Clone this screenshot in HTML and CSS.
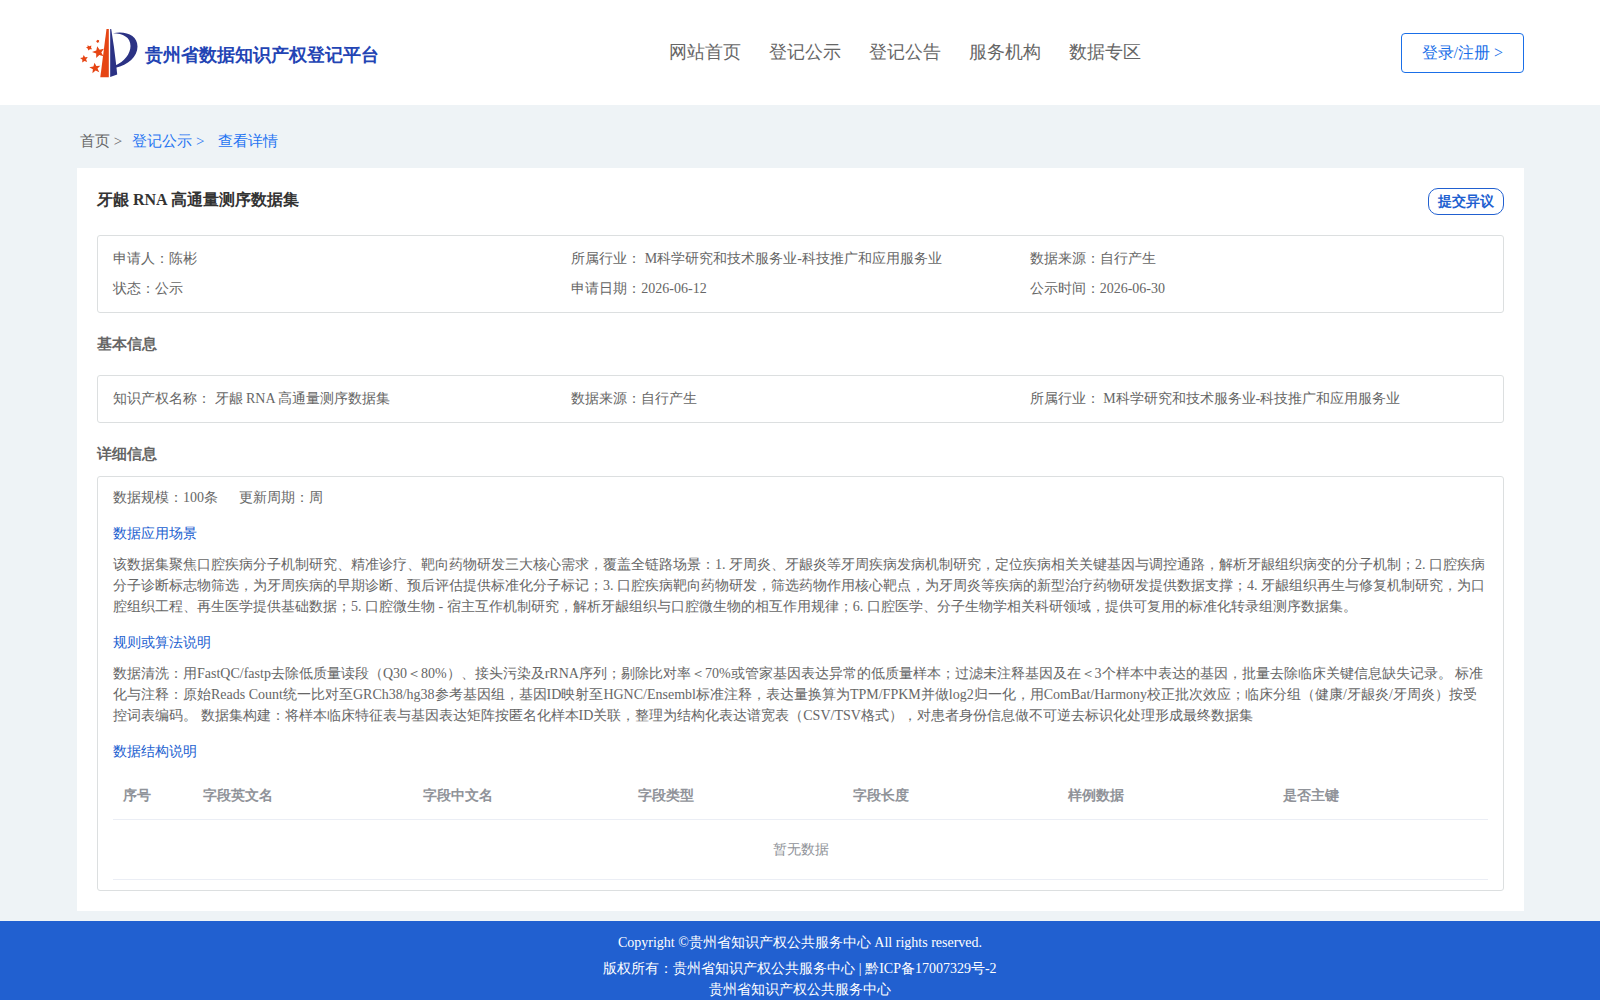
FILE: index.html
```html
<!DOCTYPE html>
<html lang="en">
<head>
<meta charset="utf-8">
<meta name="viewport" content="width=device-width, initial-scale=1">
<title>贵州省数据知识产权登记平台</title>
<link rel="stylesheet" href="styles.css">
</head>
<body>
<header class="header">
  <a class="brand" href="#">
    <svg class="brand-mark" viewBox="0 0 60 50" aria-hidden="true">
      <path fill="#e64514" d="M26.500 1h2.300v48.200h-8.500z"/>
      <path fill="#2b3284" d="M30.200 1h1l2.600 17 2.400 19 1 9.500-7 2.500z"/>
      <path fill="#2b3284" d="M33 5.200C46 2.500 57.500 7.500 57.500 18.500 57.500 29 48 37 35.500 39.800L35.500 37.500C44 33.500 50.500 26 50.500 18 50.500 9 43 5.500 33 5.200z"/>
      <g fill="#e64514">
        <path d="M17.200 18.200l2.400 3.600 4.300-1-2.600 3.600 2.200 3.900-4.200-1.400-3.100 3.200 0-4.500-4.200-1.700 4.300-1.300z"/>
        <path d="M14.500 34.800l1.800 3.300 4-.4-2.800 2.900 1.800 3.700-3.700-1.700-3.200 2.700.5-4-3.600-2.100 4.100-.8z"/>
        <path d="M3.700 27l1.400 2.300 2.700-.2-1.700 2.200 1 2.600-2.600-1-2.300 1.500.2-2.700-2.300-1.600 2.700-.7z"/>
        <path d="M7.500 17.200l1.900 1 2-.6-.4 1.900 1 1.800-2.100-.1-1.500 1.300-.7-2-1.700-1 1.700-.8z"/>
        <path d="M17 11.800l1 .5 1.200-.2-.3 1.200.4 1.100-1.200-.1-1 .7-.4-1.200-.9-.7 1.100-.4z"/>
      </g>
    </svg>
    <span class="brand-name">贵州省数据知识产权登记平台</span>
  </a>
  <nav class="nav">
    <a href="#">网站首页</a>
    <a href="#">登记公示</a>
    <a href="#">登记公告</a>
    <a href="#">服务机构</a>
    <a href="#">数据专区</a>
  </nav>
  <button class="login" type="button">登录/注册 &gt;</button>
</header>

<main class="main">
  <nav class="crumbs">
    <a href="#">首页 &gt;</a>
    <a class="crumb-link" href="#">登记公示 &gt;</a>
    <a class="crumb-link crumb-current" href="#">查看详情</a>
  </nav>

  <article class="card">
    <div class="card-head">
      <h1 class="title">牙龈 RNA 高通量测序数据集</h1>
      <button class="objection" type="button">提交异议</button>
    </div>

    <div class="box grid">
      <p>申请人：陈彬</p>
      <p>所属行业： M科学研究和技术服务业-科技推广和应用服务业</p>
      <p>数据来源：自行产生</p>
      <p>状态：公示</p>
      <p>申请日期：2026-06-12</p>
      <p>公示时间：2026-06-30</p>
    </div>

    <h2 class="section basic">基本信息</h2>
    <div class="box grid">
      <p>知识产权名称： 牙龈 RNA 高通量测序数据集</p>
      <p>数据来源：自行产生</p>
      <p>所属行业： M科学研究和技术服务业-科技推广和应用服务业</p>
    </div>

    <h2 class="section detail-title">详细信息</h2>
    <div class="box detail">
      <p class="facts"><span>数据规模：100条</span><span>更新周期：周</span></p>
      <h3 class="sub">数据应用场景</h3>
      <p>该数据集聚焦口腔疾病分子机制研究、精准诊疗、靶向药物研发三大核心需求，覆盖全链路场景：1. 牙周炎、牙龈炎等牙周疾病发病机制研究，定位疾病相关关键基因与调控通路，解析牙龈组织病变的分子机制；2. 口腔疾病分子诊断标志物筛选，为牙周疾病的早期诊断、预后评估提供标准化分子标记；3. 口腔疾病靶向药物研发，筛选药物作用核心靶点，为牙周炎等疾病的新型治疗药物研发提供数据支撑；4. 牙龈组织再生与修复机制研究，为口腔组织工程、再生医学提供基础数据；5. 口腔微生物 - 宿主互作机制研究，解析牙龈组织与口腔微生物的相互作用规律；6. 口腔医学、分子生物学相关科研领域，提供可复用的标准化转录组测序数据集。</p>
      <h3 class="sub">规则或算法说明</h3>
      <p>数据清洗：用FastQC/fastp去除低质量读段（Q30＜80%）、接头污染及rRNA序列；剔除比对率＜70%或管家基因表达异常的低质量样本；过滤未注释基因及在＜3个样本中表达的基因，批量去除临床关键信息缺失记录。 标准化与注释：原始Reads Count统一比对至GRCh38/hg38参考基因组，基因ID映射至HGNC/Ensembl标准注释，表达量换算为TPM/FPKM并做log2归一化，用ComBat/Harmony校正批次效应；临床分组（健康/牙龈炎/牙周炎）按受控词表编码。 数据集构建：将样本临床特征表与基因表达矩阵按匿名化样本ID关联，整理为结构化表达谱宽表（CSV/TSV格式），对患者身份信息做不可逆去标识化处理形成最终数据集</p>
      <h3 class="sub">数据结构说明</h3>
      <table class="fields">
        <colgroup><col class="col-index"><col class="col-name"><col><col><col><col><col></colgroup>
        <thead>
          <tr><th>序号</th><th>字段英文名</th><th>字段中文名</th><th>字段类型</th><th>字段长度</th><th>样例数据</th><th>是否主键</th></tr>
        </thead>
        <tbody>
          <tr><td class="empty" colspan="7">暂无数据</td></tr>
        </tbody>
      </table>
    </div>
  </article>
</main>

<footer class="footer">
  <p class="copyright">Copyright ©贵州省知识产权公共服务中心 All rights reserved.</p>
  <p>版权所有：贵州省知识产权公共服务中心 | 黔ICP备17007329号-2</p>
  <p>贵州省知识产权公共服务中心</p>
</footer>
</body>
</html>
```
FILE: styles.css
```css
* {
  box-sizing: border-box;
}

body {
  margin: 0;
  background: #eef3f6;
  color: #666;
  font-family: "Liberation Serif", serif;
  font-size: 14px;
  line-height: 21px;
  text-spacing-trim: space-all;
}

h1, h2, h3, p {
  margin: 0;
}

a {
  color: inherit;
  text-decoration: none;
}

button {
  font-family: inherit;
  background: #fff;
  cursor: pointer;
}

.header {
  display: flex;
  align-items: center;
  justify-content: space-between;
  height: 105px;
  padding: 0 76px 0 80px;
  background: #fff;
}

.brand {
  display: flex;
  align-items: center;
  gap: 5px;
  padding-right: 30px;
}

.brand-mark {
  width: 60px;
  height: 50px;
}

.brand-name {
  padding-top: 4px;
  color: #2344b4;
  font-size: 18px;
  font-weight: bold;
  line-height: 24px;
}

.nav {
  display: flex;
  gap: 28px;
  font-size: 18px;
  line-height: 24px;
  padding-bottom: 2px;
}

.login {
  height: 40px;
  padding: 0 20px;
  border: 1px solid #1a6fe8;
  border-radius: 4px;
  color: #1a6fe8;
  font-size: 16px;
  line-height: 38px;
}

.main {
  padding: 0 76px 10px 77px;
}

.crumbs {
  display: flex;
  gap: 10px;
  padding: 26px 3px 16px;
  font-size: 15px;
}

.crumb-link {
  color: #1f74f2;
}

.crumb-current {
  padding-left: 4px;
}

.card {
  padding: 20px;
  background: #fff;
}

.card-head {
  display: flex;
  align-items: flex-start;
  justify-content: space-between;
  margin-bottom: 20px;
}

.title {
  color: #333;
  font-size: 16px;
  line-height: 24px;
}

.objection {
  height: 27px;
  padding: 0 9px;
  border: 1px solid #2160d0;
  border-radius: 10px;
  color: #2160d0;
  font-size: 14px;
  font-weight: bold;
  line-height: 25px;
}

.box {
  padding: 8px 15px;
  border: 1px solid #dcdfe0;
  border-radius: 3px;
}

.grid {
  display: grid;
  grid-template-columns: repeat(3, 1fr);
  line-height: 30px;
}

.section {
  font-size: 15px;
  line-height: 22px;
}

.basic {
  margin: 20px 0;
}

.detail-title {
  margin: 20px 0 11px;
}

.detail {
  padding: 10px 15px;
}

.facts {
  display: flex;
  gap: 21px;
}

.sub {
  margin: 15px 0 10px;
  color: #2160d0;
  font-size: 14px;
  font-weight: normal;
}

.fields {
  width: 100%;
  table-layout: fixed;
  border-collapse: separate;
  border-spacing: 0;
  color: #909399;
}

.col-index {
  width: 80px;
}

.col-name {
  width: 220px;
}

.fields th,
.fields td {
  height: 48px;
  padding: 0 10px;
  border-bottom: 1px solid #ebeef5;
  text-align: left;
}

.fields .empty {
  height: 60px;
  text-align: center;
}

.footer {
  padding: 11px 0 10px;
  background: #2160d0;
  color: #fff;
  text-align: center;
}

.copyright {
  margin-bottom: 5px;
}
```
